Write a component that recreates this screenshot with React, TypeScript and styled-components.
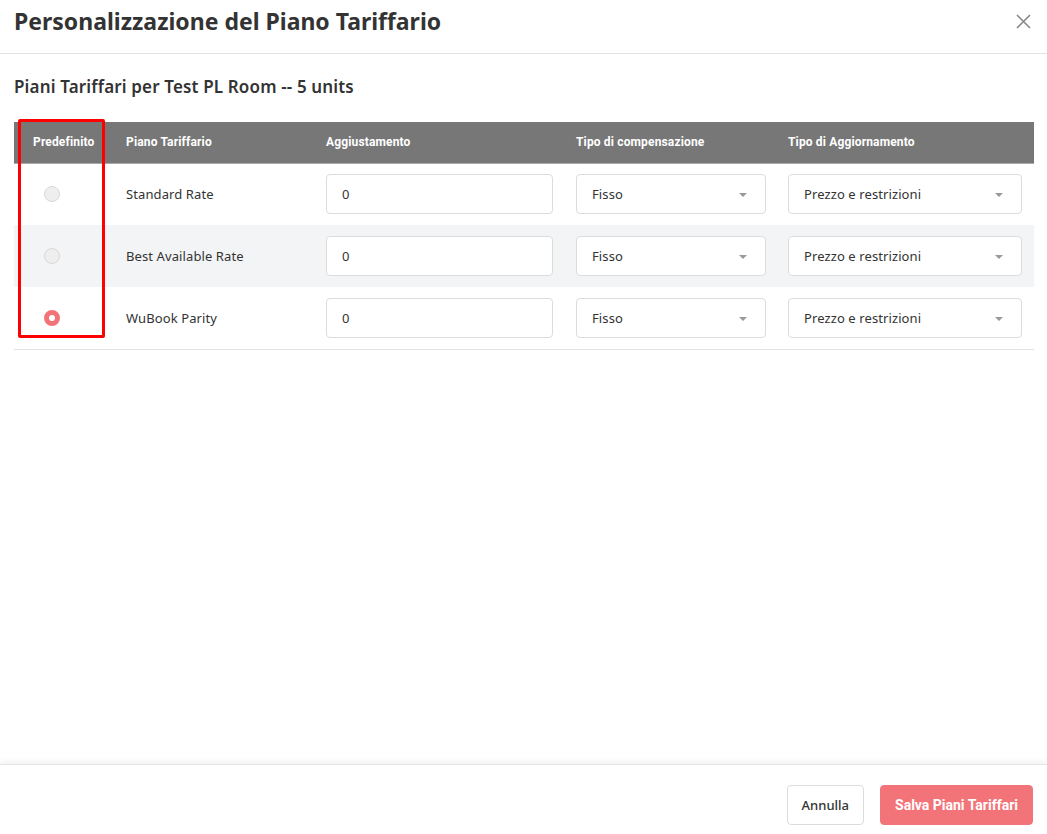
import React, { useState } from "react";
import styled, { createGlobalStyle } from "styled-components";

const Global = createGlobalStyle`
  html, body { margin: 0; padding: 0; background: #fff; }
  body { font-family: "Noto Sans", "Open Sans", sans-serif; color: #333; }
  * { box-sizing: border-box; }
`;

const Modal = styled.div`
  position: relative;
  width: 1047px;
  height: 834px;
  display: flex;
  flex-direction: column;
  background: #fff;
`;

const Header = styled.header`
  height: 54px;
  padding: 7px 16px 0 14px;
  display: flex;
  justify-content: space-between;
  align-items: flex-start;
  border-bottom: 1px solid #e3e3e3;
`;

const Title = styled.h1`
  margin: 0;
  font-size: 23px;
  line-height: 28px;
  font-weight: 700;
  color: #333;
`;

const CloseButton = styled.button`
  margin-top: 7px;
  padding: 0;
  border: 0;
  background: none;
  width: 15px;
  height: 15px;
  display: flex;
  cursor: pointer;
`;

const Body = styled.main`
  flex: 1;
  padding: 22px 13px 0 14px;
`;

const Subtitle = styled.h2`
  margin: 0 0 24px;
  font-size: 17px;
  line-height: 22px;
  font-weight: 600;
  letter-spacing: 0.15px;
  color: #333;
`;

const Table = styled.table`
  width: 1020px;
  border-collapse: collapse;
  table-layout: fixed;
`;

const Th = styled.th<{ $w: number; $pl?: number }>`
  width: ${(p) => p.$w}px;
  height: 41px;
  padding: 0 12px 0 ${(p) => p.$pl ?? 12}px;
  background: #777;
  border-bottom: 1px solid #a9a9a9;
  color: #fff;
  font-family: Roboto, "Noto Sans", sans-serif;
  font-size: 12px;
  letter-spacing: 0.15px;
  font-weight: 700;
  text-align: left;
  white-space: nowrap;
`;

const Tr = styled.tr<{ $alt?: boolean }>`
  background: ${(p) => (p.$alt ? "#f3f4f6" : "#fff")};
  &:last-child td { border-bottom: 1px solid #e3e3e3; }
`;

const Td = styled.td<{ $pl?: number; $pr?: number }>`
  height: 62px;
  padding: 0 ${(p) => p.$pr ?? 12}px 0 ${(p) => p.$pl ?? 12}px;
  font-size: 13px;
  letter-spacing: 0.1px;
  color: #333;
  vertical-align: middle;
`;

const Radio = styled.span<{ $on?: boolean }>`
  display: block;
  width: 16px;
  height: 16px;
  border-radius: 50%;
  margin-left: 11px;
  background: ${(p) => (p.$on ? "#fff" : "#eee")};
  border: ${(p) => (p.$on ? "5px solid #f27479" : "1px solid #d9d9d9")};
`;

const Input = styled.input`
  width: 100%;
  height: 40px;
  padding: 0 15px;
  border: 1px solid #dcdcdc;
  border-radius: 4px;
  background: #fff;
  font-family: inherit;
  font-size: 13px;
  color: #333;
  outline: none;
`;

const Select = styled.div`
  height: 40px;
  padding: 0 18px 0 15px;
  border: 1px solid #dcdcdc;
  border-radius: 4px;
  background: #fff;
  display: flex;
  align-items: center;
  justify-content: space-between;
  font-size: 13px;
  color: #333;
`;

const Caret = styled.span`
  width: 0;
  height: 0;
  border-left: 4px solid transparent;
  border-right: 4px solid transparent;
  border-top: 4px solid #999;
  margin-top: 2px;
`;

const Footer = styled.footer`
  border-top: 1px solid #e6e6e6;
  box-shadow: 0 -3px 5px rgba(0, 0, 0, 0.05);
  padding: 20px 14px 9px;
  display: flex;
  justify-content: flex-end;
  gap: 16px;
`;

const Button = styled.button<{ $primary?: boolean }>`
  height: 40px;
  padding: 0 14px;
  border-radius: 4px;
  border: 1px solid ${(p) => (p.$primary ? "#f27479" : "#dcdcdc")};
  background: ${(p) => (p.$primary ? "#f27479" : "#fff")};
  color: ${(p) => (p.$primary ? "#fff" : "#333")};
  font-family: ${(p) => (p.$primary ? 'Roboto, "Noto Sans", sans-serif' : "inherit")};
  font-size: ${(p) => (p.$primary ? 14 : 13)}px;
  font-weight: ${(p) => (p.$primary ? 700 : 500)};
  cursor: pointer;
`;

const Highlight = styled.div`
  position: absolute;
  left: 18px;
  top: 119px;
  width: 87px;
  height: 219px;
  border: 3px solid #ff0000;
  border-radius: 2px;
  pointer-events: none;
`;

const rows = ["Standard Rate", "Best Available Rate", "WuBook Parity"];

export default function App() {
  const [selected, setSelected] = useState(2);
  return (
    <Modal>
      <Global />
      <Header>
        <Title>Personalizzazione del Piano Tariffario</Title>
        <CloseButton aria-label="Chiudi">
          <svg width="15" height="15" viewBox="0 0 15 15">
            <path d="M1 1 L14 14 M14 1 L1 14" stroke="#888" strokeWidth="1.6" />
          </svg>
        </CloseButton>
      </Header>
      <Body>
        <Subtitle>Piani Tariffari per Test PL Room -- 5 units</Subtitle>
        <Table>
          <thead>
            <tr>
              <Th $w={100} $pl={19}>Predefinito</Th>
              <Th $w={200}>Piano Tariffario</Th>
              <Th $w={251}>Aggiustamento</Th>
              <Th $w={212} $pl={11}>Tipo di compensazione</Th>
              <Th $w={257} $pl={11}>Tipo di Aggiornamento</Th>
            </tr>
          </thead>
          <tbody>
            {rows.map((name, i) => (
              <Tr key={name} $alt={i === 1}>
                <Td $pl={19} onClick={() => setSelected(i)}>
                  <Radio $on={selected === i} />
                </Td>
                <Td>{name}</Td>
                <Td>
                  <Input defaultValue="0" />
                </Td>
                <Td $pl={11} $pr={11}>
                  <Select>
                    Fisso
                    <Caret />
                  </Select>
                </Td>
                <Td $pl={11}>
                  <Select>
                    Prezzo e restrizioni
                    <Caret />
                  </Select>
                </Td>
              </Tr>
            ))}
          </tbody>
        </Table>
      </Body>
      <Footer>
        <Button>Annulla</Button>
        <Button $primary>Salva Piani Tariffari</Button>
      </Footer>
      <Highlight />
    </Modal>
  );
}
